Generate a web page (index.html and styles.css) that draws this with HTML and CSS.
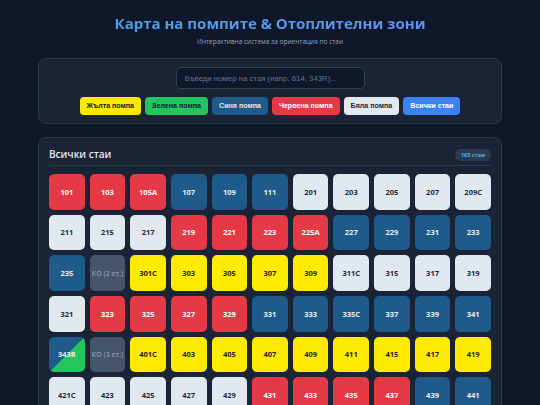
FILE: index.html
```html
<!DOCTYPE html>
<html lang="bg">
<head>
<meta charset="utf-8">
<title>Карта на помпите</title>
<link rel="stylesheet" href="styles.css">
</head>
<body>
<div class="page">
  <header class="hero">
    <h1 class="title">Карта на помпите &amp; Отоплителни зони</h1>
    <p class="subtitle">Интерактивна система за ориентация по стаи</p>
  </header>

  <section class="panel controls">
    <input class="search" type="text" placeholder="Въведи номер на стая (напр. 614, 343R)...">
    <div class="filters">
      <button class="btn btn-yellow">Жълта помпа</button>
      <button class="btn btn-green">Зелена помпа</button>
      <button class="btn btn-blue">Синя помпа</button>
      <button class="btn btn-red">Червена помпа</button>
      <button class="btn btn-white">Бяла помпа</button>
      <button class="btn btn-all">Всички стаи</button>
    </div>
  </section>

  <section class="panel rooms">
    <div class="rooms-head">
      <h2 class="rooms-title">Всички стаи</h2>
      <span class="badge">165 стаи</span>
    </div>
    <div class="grid">
      <div class="room red">101</div><div class="room red">103</div><div class="room red">105A</div><div class="room blue">107</div><div class="room blue">109</div><div class="room blue">111</div><div class="room white">201</div><div class="room white">203</div><div class="room white">205</div><div class="room white">207</div><div class="room white">209C</div>
      <div class="room white">211</div><div class="room white">215</div><div class="room white">217</div><div class="room red">219</div><div class="room red">221</div><div class="room red">223</div><div class="room red">225A</div><div class="room blue">227</div><div class="room blue">229</div><div class="room blue">231</div><div class="room blue">233</div>
      <div class="room blue">235</div><div class="room ko">КО (2 ет.)</div><div class="room yellow">301C</div><div class="room yellow">303</div><div class="room yellow">305</div><div class="room yellow">307</div><div class="room yellow">309</div><div class="room white">311C</div><div class="room white">315</div><div class="room white">317</div><div class="room white">319</div>
      <div class="room white">321</div><div class="room red">323</div><div class="room red">325</div><div class="room red">327</div><div class="room red">329</div><div class="room blue">331</div><div class="room blue">333</div><div class="room blue">335C</div><div class="room blue">337</div><div class="room blue">339</div><div class="room blue">341</div>
      <div class="room bluegreen">343R</div><div class="room ko">КО (3 ет.)</div><div class="room yellow">401C</div><div class="room yellow">403</div><div class="room yellow">405</div><div class="room yellow">407</div><div class="room yellow">409</div><div class="room yellow">411</div><div class="room yellow">415</div><div class="room yellow">417</div><div class="room yellow">419</div>
      <div class="room white">421C</div><div class="room white">423</div><div class="room white">425</div><div class="room white">427</div><div class="room white">429</div><div class="room red">431</div><div class="room red">433</div><div class="room red">435</div><div class="room red">437</div><div class="room blue">439</div><div class="room blue">441</div>
    </div>
  </section>
</div>
</body>
</html>
```
FILE: styles.css
```css
* { box-sizing: border-box; }
html, body { margin: 0; padding: 0; }
body {
  background: #0f172a;
  color: #e2e8f0;
  font-family: "Open Sans", "Noto Sans", sans-serif;
}
.page {
  width: 464px;
  margin: 0 auto;
  padding-top: 13px;
}
.hero { text-align: center; }
.title {
  margin: 0;
  font-size: 15px;
  line-height: 20px;
  font-weight: 700;
  background: linear-gradient(90deg, #4aa6e0 0%, #5b98ea 60%, #6c8ef2 100%);
  -webkit-background-clip: text;
  background-clip: text;
  color: transparent;
}
.subtitle {
  margin: 4px 0 11px;
  font-size: 6.5px;
  line-height: 10px;
  color: #94a3b8;
}
.panel {
  background: #1a2436;
  border: 1px solid #2a3649;
  border-radius: 8px;
}
.controls {
  padding: 8px;
  display: flex;
  flex-direction: column;
  align-items: center;
  gap: 8px;
}
.search {
  width: 189px;
  height: 22px;
  background: #0f172a;
  border: 1px solid #334155;
  border-radius: 5px;
  padding: 0 8px;
  font-family: "Liberation Sans", Arial, sans-serif;
  font-size: 7.8px;
  color: #e2e8f0;
  outline: none;
}
.search::placeholder { color: #64748b; }
.filters {
  display: flex;
  justify-content: center;
  gap: 4px;
}
.btn {
  height: 18px;
  border: none;
  border-radius: 4px;
  padding: 0 7px;
  font-family: "Liberation Sans", Arial, sans-serif;
  font-size: 7.1px;
  font-weight: 700;
  white-space: nowrap;
  text-align: center;
  cursor: pointer;
}
.btn-yellow { background: #ffe800; color: #111827; }
.btn-green { background: #22c55e; color: #0f172a; }
.btn-blue { background: #1e5b8a; color: #e2e8f0; }
.btn-red { background: #e63946; color: #ffffff; }
.btn-white { background: #e2e8f0; color: #1e293b; }
.btn-all { background: #3b82f6; color: #ffffff; }

.rooms {
  margin-top: 13px;
  padding: 10px;
}
.rooms-head {
  display: flex;
  justify-content: space-between;
  align-items: center;
  padding-bottom: 4px;
  border-bottom: 1px solid #2a3649;
  margin-bottom: 8px;
}
.rooms-title {
  margin: 0;
  font-size: 10px;
  line-height: 13px;
  font-weight: 600;
  color: #e2e8f0;
}
.badge {
  height: 12px;
  line-height: 12px;
  padding: 0 6px;
  border-radius: 6px;
  background: #2c3b52;
  color: #4fb0e6;
  font-size: 5.5px;
  font-weight: 700;
}
.grid {
  display: grid;
  grid-template-columns: repeat(11, 1fr);
  gap: 5px;
}
.room {
  aspect-ratio: 1 / 1;
  border-radius: 5px;
  display: flex;
  align-items: center;
  justify-content: center;
  font-size: 7.5px;
  font-weight: 700;
  white-space: nowrap;
  overflow: hidden;
}
.red { background: #e63946; color: #ffffff; }
.blue { background: #1e5b8a; color: #e8eef5; }
.white { background: #e2e8f0; color: #1e293b; }
.yellow { background: #ffea00; color: #1f1f1f; }
.ko { background: #475569; color: #8e9cb0; font-weight: 600; font-size: 7px; }
.bluegreen { background: linear-gradient(135deg, #1e5b8a 50%, #22c55e 50%); color: #e8eef5; }
```
